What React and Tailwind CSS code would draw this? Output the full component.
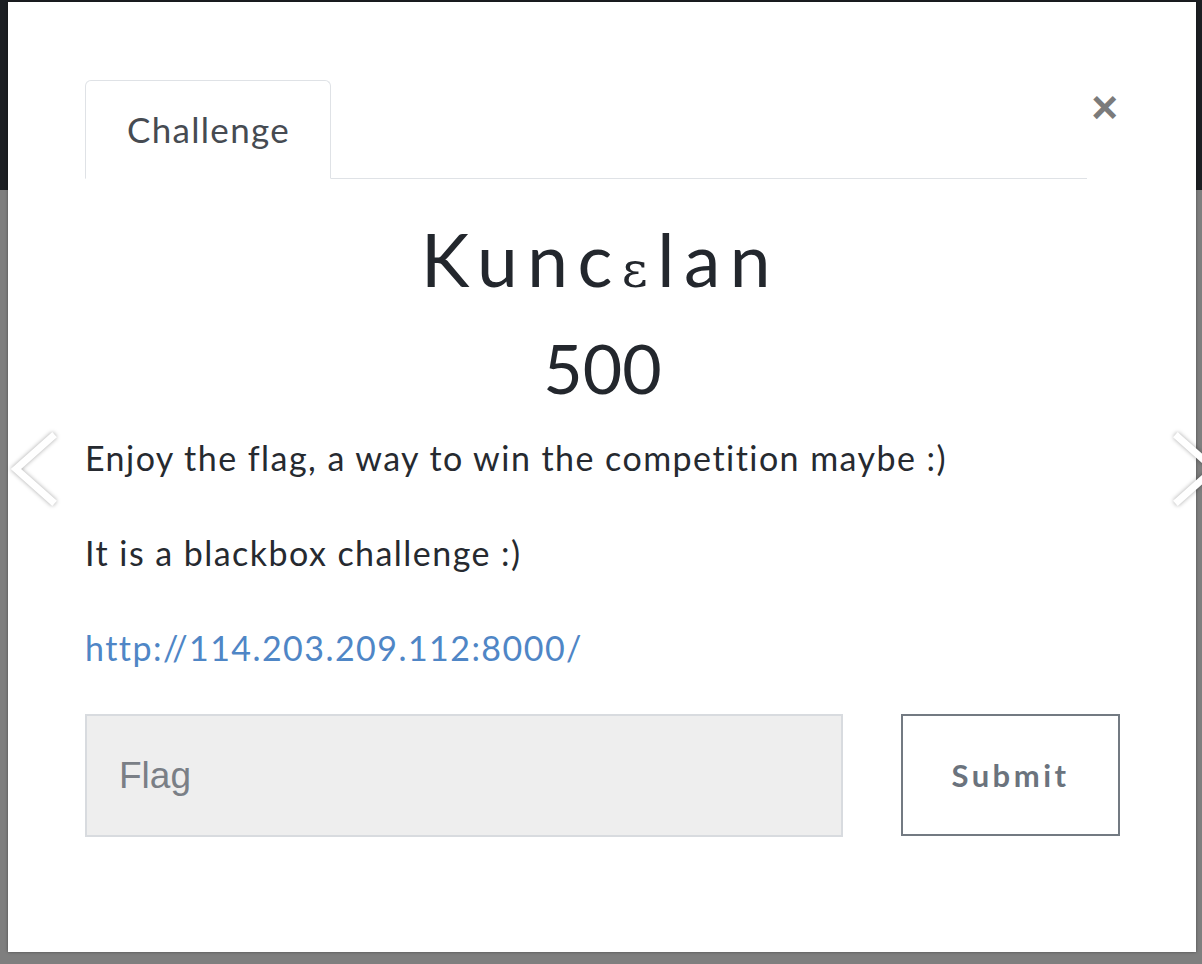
import React from "react";

function Chevron({ dir }) {
  const pts = dir === "left" ? "46,6 10,38 46,70" : "6,6 42,38 6,70";
  return (
    <svg width="52" height="76" viewBox="0 0 52 76" className="drop-shadow-[0_0_2px_rgba(0,0,0,0.35)]">
      <polyline points={pts} fill="none" stroke="#ffffff" strokeWidth="7" strokeLinecap="square" strokeLinejoin="miter" />
    </svg>
  );
}

export default function App() {
  return (
    <div className="relative w-[1202px] h-[964px] overflow-hidden bg-[#7f7f7f]" style={{ fontFamily: "Lato, 'Open Sans', sans-serif" }}>
      <div className="h-[190px] bg-[#1c1f23]" />
      <div className="absolute left-[8px] top-[2px] w-[1188px] h-[950px] bg-white shadow-[0_0_3px_rgba(0,0,0,0.4)] pl-[77px] pr-[76px] pt-[78px]">
        <div className="relative flex items-end mr-[33px] border-b border-[#dfe2e6]">
          <div className="w-[246px] h-[99px] -mb-px border border-[#dfe2e6] border-b-white rounded-t-[6px] bg-white flex items-center justify-center pb-[2px]">
            <span className="text-[35px] leading-[40px] text-[#464b52] font-['Lato'] tracking-[1.3px] pl-[1px]">Challenge</span>
          </div>
          <button className="absolute right-[-31px] top-[4px] text-[46px] leading-none font-bold text-[#7b7b7b] font-['Liberation_Sans']">×</button>
        </div>
        <h1 className="mt-[38px] text-center text-[73px] leading-[84px] text-[#23272d] tracking-[9.5px] pr-[4px] font-['Lato']">
          Kunc<span className="font-['DejaVu_Serif'] text-[50px]">ε</span>lan
        </h1>
        <div className="mt-[16px] text-center text-[68px] leading-[80px] text-[#23272d] font-['Lato']">500</div>
        <div className="mt-[26px] text-[34px] leading-[48px] tracking-[1.45px] text-[#262a30] font-['Lato']">
          <p>Enjoy the flag, a way to win the competition maybe :)</p>
          <p className="mt-[47px]">It is a blackbox challenge :)</p>
          <p className="mt-[47px]"><a className="text-[#4f86c6]">http://114.203.209.112:8000/</a></p>
        </div>
        <div className="mt-[42px] flex justify-between">
          <div className="w-[758px] h-[123px] bg-[#eeeeee] border-2 border-[#d8dbdf] flex items-center pl-[32px]">
            <span className="text-[37px] text-[#7a7f86] font-['Liberation_Sans']">Flag</span>
          </div>
          <button className="w-[219px] h-[122px] border-2 border-[#737a82] bg-white text-[31px] font-bold tracking-[3.5px] text-[#6b737d] font-['Lato']">Submit</button>
        </div>
      </div>
      <div className="absolute left-[6px] top-[431px]"><Chevron dir="left" /></div>
      <div className="absolute left-[1172px] top-[431px]"><Chevron dir="right" /></div>
    </div>
  );
}
